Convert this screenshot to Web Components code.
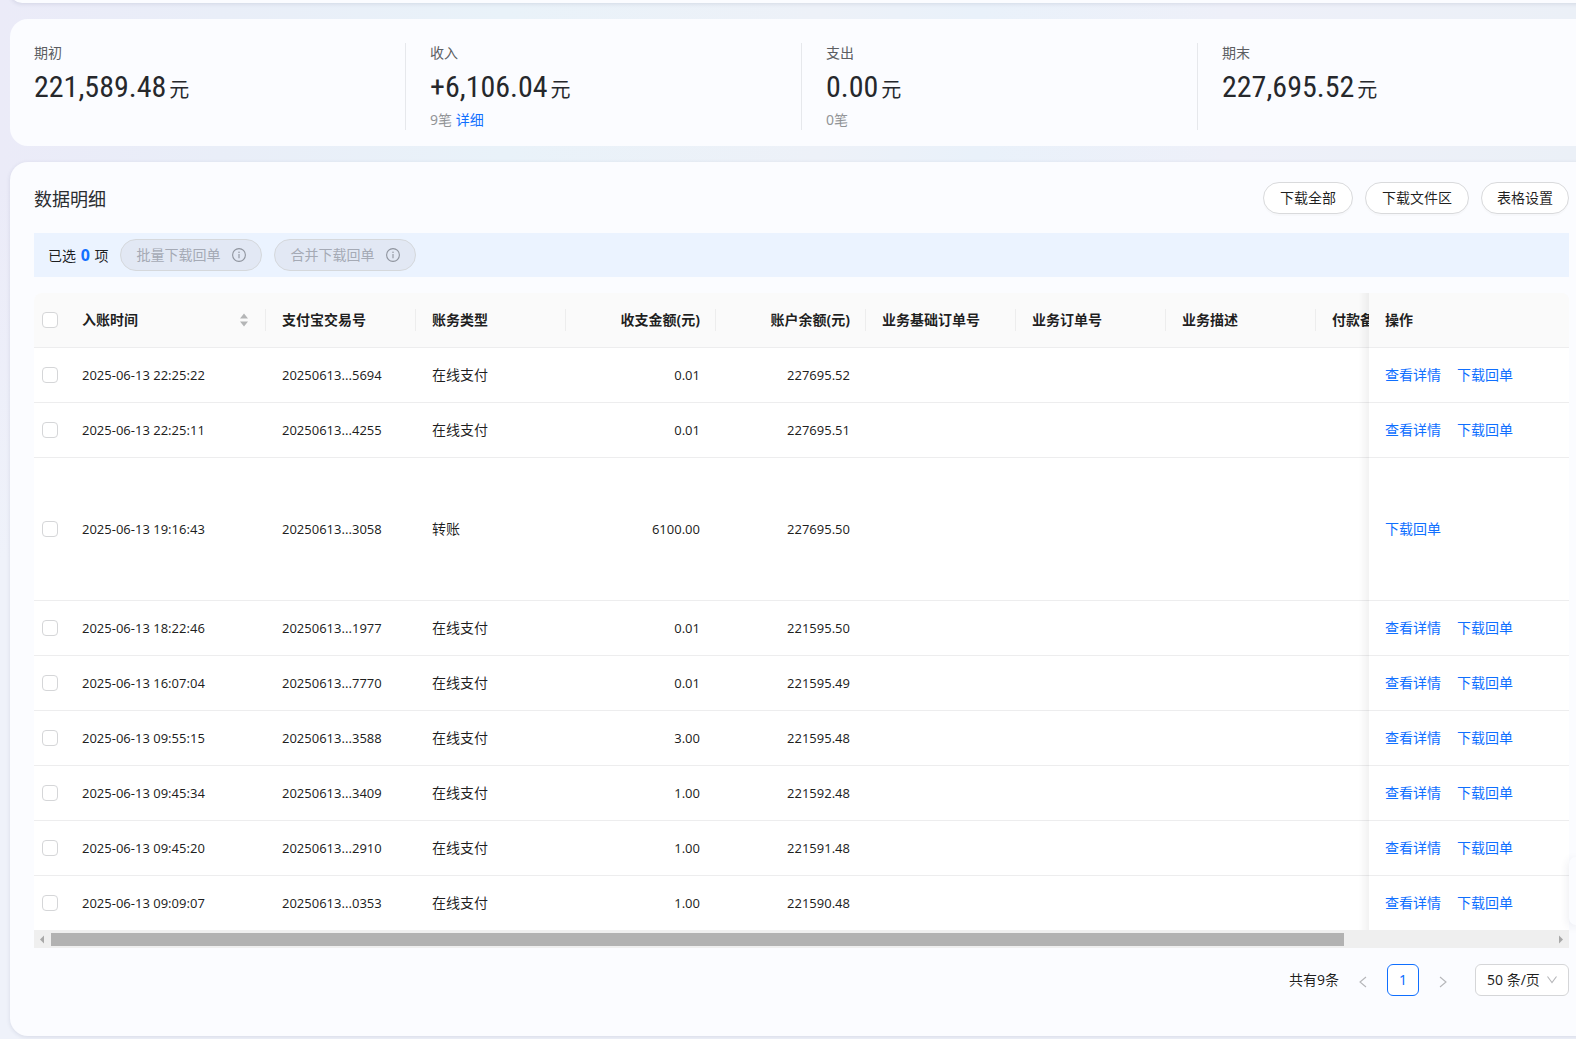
<!DOCTYPE html>
<html lang="zh-CN">
<head>
<meta charset="utf-8">
<title>数据明细</title>
<style>
html, body { margin: 0; height: 100%; overflow: hidden; }
body {
  font-family: "Noto Sans", "Noto Sans CJK SC", sans-serif;
  font-size: 14px; line-height: 22px; color: rgba(0,0,0,.88);
  background:
    linear-gradient(180deg, rgba(239,242,250,0) 0, rgba(239,242,250,0) 180px, #eff2fa 560px),
    linear-gradient(90deg, #ebebf8 0%, #e9eef8 14%, #e9f2f9 32%, #edf1f8 52%, #e9f1fa 62%, #eef0f9 78%, #ebf0f7 100%);
}
</style>
</head>
<body>
<bill-page></bill-page>
<script>
const define = (name, html, setup) => {
  const tpl = document.createElement('template');
  tpl.innerHTML = html;
  customElements.define(name, class extends HTMLElement {
    constructor() {
      super();
      this.attachShadow({ mode: 'open' }).append(tpl.content.cloneNode(true));
    }
    connectedCallback() {
      if (setup && !this.ready) { this.ready = true; setup(this, this.shadowRoot); }
    }
  });
};

define('panel-card', `
<style>
:host { display: block; box-sizing: border-box; background: #fbfcff; border-radius: 18px; box-shadow: 0 1px 4px rgba(40,50,90,.12); }
:host([flat]) { box-shadow: none; }
</style><slot></slot>`);

define('stat-item', `
<style>
:host { display: flex; flex: 1; flex-direction: column; box-sizing: border-box; padding: 0 23px 0 24px; border-right: 1px solid #e6e8ec; }
:host(:last-child) { border-right: 0; }
.label { line-height: 20px; color: #5c5e62; }
.value { font: 30px/47px "Roboto Condensed", "Liberation Sans Narrow", "Noto Sans CJK SC", sans-serif; color: #26282c; white-space: nowrap; }
.unit { font: 20px/24px "Noto Sans CJK SC", sans-serif; margin-left: 3px; }
.note { line-height: 20px; color: #929497; }
.note ::slotted(a) { color: #0f6fff; text-decoration: none; }
</style>
<div class="label"></div>
<div class="value"><span class="num"></span><span class="unit">元</span></div>
<div class="note"><slot></slot></div>`, (el, root) => {
  root.querySelector('.label').textContent = el.getAttribute('label');
  root.querySelector('.num').textContent = el.getAttribute('value');
});

define('pill-button', `
<style>
:host { display: block; }
button { display: flex; align-items: center; gap: 12px; box-sizing: border-box; height: 32px; padding: 0 16px; margin: 0;
  font: inherit; color: inherit; background: #fff; border: 1px solid #d9dadc; border-radius: 16px; box-shadow: 0 2px 1px rgba(0,0,0,.02); white-space: nowrap; }
:host([compact]) button { padding: 0 15px; }
button:disabled { color: #a5aab5; background: #e2e8f4; border-color: #d5d8dc; padding: 0 15px; box-shadow: none; }
svg { display: none; width: 14px; height: 14px; }
:host([info]) svg { display: block; }
</style>
<button type="button"><slot></slot><svg viewBox="0 0 14 14" fill="none" stroke="#8f949e" stroke-width="1.1"><circle cx="7" cy="7" r="6.4"/><path d="M7 6.1v4.1" /><circle cx="7" cy="4.2" r=".75" fill="#8f949e" stroke="none"/></svg></button>`,
(el, root) => { root.querySelector('button').disabled = el.hasAttribute('disabled'); });

define('selection-bar', `
<style>
:host { display: flex; align-items: center; gap: 12px; height: 44px; padding: 0 14px; background: #ebf3ff; }
b { font-size: 16px; color: #1270ff; margin: 0 1px; }
</style>
<span>已选 <b>0</b> 项</span>
<pill-button info disabled>批量下载回单</pill-button>
<pill-button info disabled>合并下载回单</pill-button>`);

define('bill-table', `
<style>
:host { display: block; overflow: hidden; border-radius: 8px 8px 0 0; }
table { width: 1782px; table-layout: fixed; border-collapse: separate; border-spacing: 0; background: #fff; }
th, td { box-sizing: border-box; height: 55px; padding: 0 16px; text-align: left; border-bottom: 1px solid #ededee; white-space: nowrap; }
th { background: #fafafa; font-weight: 700; }
td { font-size: 14px; }
.n { font-size: 13px; }
.r { text-align: right; }
tr.tall td { height: 143px; }
tbody tr:last-child td { height: 54px; border-bottom: 0; }
.c { padding: 0 8px; }
.c input { display: block; }
th.d > div { display: flex; align-items: center; justify-content: space-between; height: 22px; margin-right: -16px; padding-right: 17px; border-right: 1px solid #ededed; }
th.d.r > div { justify-content: flex-end; padding-right: 15px; }
input { appearance: none; width: 16px; height: 16px; margin: 0; border: 1px solid #d5d6d8; border-radius: 4px; background: #fff; }
.fix { position: sticky; right: 0; background: #fff; }
.fix::before { content: ""; position: absolute; top: 0; bottom: -1px; right: 100%; width: 10px; background: linear-gradient(90deg, rgba(0,0,0,0), rgba(0,0,0,.05)); pointer-events: none; }
tbody tr:last-child .fix::before { bottom: 0; }
th.fix { background: #fafafa; }
.fix a { color: #0f6fff; text-decoration: none; margin-right: 16px; }
</style>
<table>
<colgroup><col style="width:32px"><col style="width:200px"><col span="8" style="width:150px"><col style="width:150px"><col style="width:200px"></colgroup>
<thead><tr>
<th class="c"><input type="checkbox" aria-label="全选"></th>
<th class="d"><div>入账时间<svg width="8" height="14" viewBox="0 0 8 14" fill="#b4b5b6"><path d="M4 .6 8 5.6H0zM4 13.4 0 8.4h8z"/></svg></div></th>
<th class="d"><div>支付宝交易号</div></th><th class="d"><div>账务类型</div></th>
<th class="d r"><div>收支金额(元)</div></th><th class="d r"><div>账户余额(元)</div></th>
<th class="d"><div>业务基础订单号</div></th><th class="d"><div>业务订单号</div></th><th class="d"><div>业务描述</div></th>
<th class="d"><div>付款备注</div></th><th class="d"><div></div></th><th class="fix">操作</th>
</tr></thead><tbody></tbody></table>`, (el, root) => {
  const rows = [
    ['22:25:22', '5694', '在线支付', '0.01', '227695.52'],
    ['22:25:11', '4255', '在线支付', '0.01', '227695.51'],
    ['19:16:43', '3058', '转账', '6100.00', '227695.50'],
    ['18:22:46', '1977', '在线支付', '0.01', '221595.50'],
    ['16:07:04', '7770', '在线支付', '0.01', '221595.49'],
    ['09:55:15', '3588', '在线支付', '3.00', '221595.48'],
    ['09:45:34', '3409', '在线支付', '1.00', '221592.48'],
    ['09:45:20', '2910', '在线支付', '1.00', '221591.48'],
    ['09:09:07', '0353', '在线支付', '1.00', '221590.48']
  ];
  root.querySelector('tbody').innerHTML = rows.map(([time, id, type, sum, left]) => `
    <tr class="${type === '转账' ? 'tall' : ''}">
      <td class="c"><input type="checkbox" aria-label="选择 ${time}"></td>
      <td class="n">2025-06-13 ${time}</td><td class="n">20250613...${id}</td><td>${type}</td>
      <td class="n r">${sum}</td><td class="n r">${left}</td><td></td><td></td><td></td><td></td><td></td>
      <td class="fix">${type === '转账' ? '' : '<a href="#">查看详情</a>'}<a href="#">下载回单</a></td>
    </tr>`).join('');
});

define('scroll-rail', `
<style>
:host { display: flex; align-items: center; height: 18px; background: #efefef; }
svg { flex: none; width: 17px; height: 18px; fill: #a8a8a8; }
.track { flex: 1; }
.thumb { width: 86.15%; height: 13px; background: #b2b2b2; }
</style>
<svg viewBox="0 0 17 18"><path d="M10 5.500v8L6 9.500z"/></svg><div class="track"><div class="thumb"></div></div><svg viewBox="0 0 17 18"><path d="M7 5.500v8l4-4z"/></svg>`);

define('page-nav', `
<style>
:host { display: flex; justify-content: flex-end; align-items: center; gap: 8px; }
button { box-sizing: border-box; width: 32px; height: 32px; padding: 0; border: 1px solid transparent; border-radius: 6px; background: none; font: inherit; }
button.on { color: #0f6fff; border-color: #0f6fff; background: #fff; }
button svg { display: block; margin: 4px auto 0; }
label { position: relative; display: flex; align-items: center; margin-left: 8px; }
select { appearance: none; box-sizing: border-box; width: 94px; height: 32px; padding: 0 11px; margin: 0; font: inherit; color: inherit; background: #fff; border: 1px solid #d5d6d8; border-radius: 6px; }
label svg { position: absolute; right: 11px; pointer-events: none; }
svg { fill: none; stroke: #b5b6b9; stroke-width: 1.1; }
</style>
<span>共有9条</span>
<button type="button" aria-label="上一页"><svg width="8" height="12" viewBox="0 0 8 12"><path d="M7 1 1 6l6 5"/></svg></button>
<button type="button" class="on">1</button>
<button type="button" aria-label="下一页"><svg width="8" height="12" viewBox="0 0 8 12"><path d="M1 1l6 5-6 5"/></svg></button>
<label><select aria-label="每页条数"><option>50 条/页</option></select><svg width="12" height="10" viewBox="0 0 12 10"><path d="M1.500 1.500 6 7.500l4.500-6"/></svg></label>`);

define('bill-page', `
<style>
:host { display: flex; flex-direction: column; gap: 16px; margin-right: -17px; padding-left: 10px; }
.above { height: 24px; margin-top: -21px; }
.stats { display: flex; padding: 24px 0 16px; }
.detail { padding: 20px 24px 40px; }
header { display: flex; align-items: center; gap: 12px; margin-bottom: 19px; }
h2 { flex: 1; margin: 0; font: 400 18px/32px "Noto Sans CJK SC", sans-serif; color: #2b2d31; }
selection-bar { margin-bottom: 16px; }
page-nav { margin-top: 16px; }
aside { position: fixed; right: 0; top: 857px; width: 7px; height: 68px; background: #fbfcff; border-radius: 8px 0 0 8px; box-shadow: 0 2px 10px rgba(40,50,90,.12); }
</style>
<panel-card class="above"></panel-card>
<panel-card class="stats" flat>
  <stat-item label="期初" value="221,589.48"></stat-item>
  <stat-item label="收入" value="+6,106.04">9笔 <a href="#">详细</a></stat-item>
  <stat-item label="支出" value="0.00">0笔</stat-item>
  <stat-item label="期末" value="227,695.52"></stat-item>
</panel-card>
<panel-card class="detail">
  <header><h2>数据明细</h2><pill-button>下载全部</pill-button><pill-button>下载文件区</pill-button><pill-button compact>表格设置</pill-button></header>
  <selection-bar></selection-bar>
  <bill-table></bill-table>
  <scroll-rail></scroll-rail>
  <page-nav></page-nav>
</panel-card>
<aside></aside>`);
</script>
</body>
</html>
